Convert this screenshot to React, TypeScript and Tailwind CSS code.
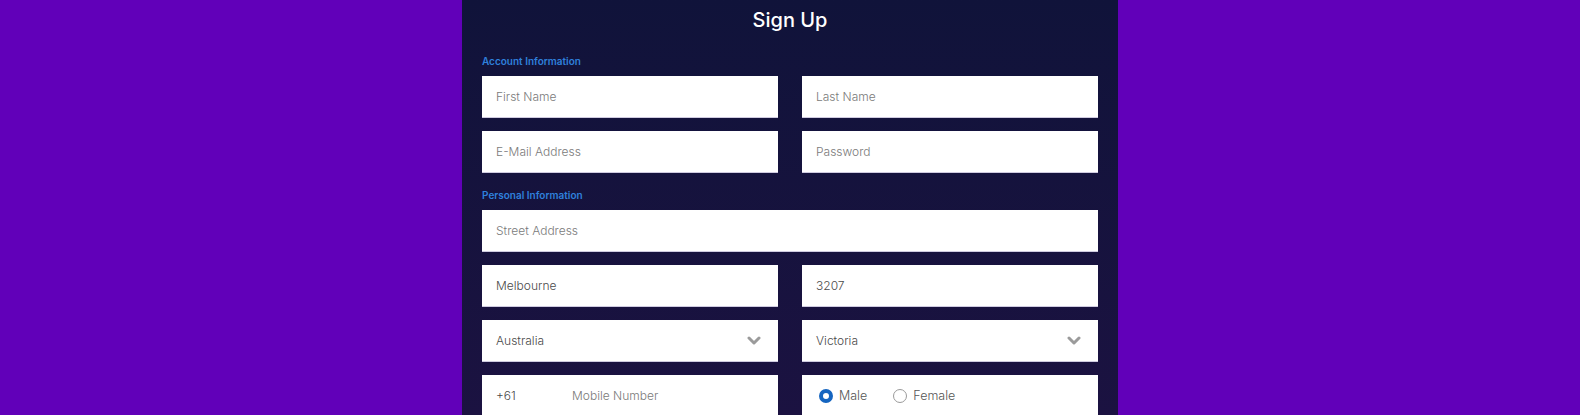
function Field({ placeholder, value, className = "" }: { placeholder?: string; value?: string; className?: string }) {
  return (
    <div className={`h-[42px] bg-white border-b border-[#cfcbe0] flex items-center px-[14px] ${className}`}>
      <span className={`text-[12px] font-light ${value ? "text-[#4a4a4a]" : "text-[#7a7a7a]"}`}>{value ?? placeholder}</span>
    </div>
  );
}

function SelectField({ value }: { value: string }) {
  return (
    <div className="h-[42px] bg-white border-b border-[#cfcbe0] flex items-center justify-between pl-[14px] pr-[17px]">
      <span className="text-[12px] font-light text-[#4a4a4a]">{value}</span>
      <svg width="14" height="9" viewBox="0 0 14 9" fill="none" stroke="#9b9b9b" strokeWidth="3" strokeLinecap="round" strokeLinejoin="round">
        <polyline points="2,2 7,7 12,2" />
      </svg>
    </div>
  );
}

function Radio({ label, checked }: { label: string; checked?: boolean }) {
  return (
    <label className="flex items-center gap-[6px]">
      {checked ? (
        <span className="w-[14px] h-[14px] rounded-full border-[4px] border-[#1565c0] bg-white" />
      ) : (
        <span className="w-[14px] h-[14px] rounded-full border border-[#9a9a9a] bg-white" />
      )}
      <span className="text-[12.5px] font-light text-[#555]">{label}</span>
    </label>
  );
}

export default function App() {
  return (
    <div
      className="w-[1580px] h-[415px] bg-[#6100b9] overflow-hidden flex justify-center"
      style={{ fontFamily: "Inter, 'Noto Sans', sans-serif" }}
    >
      <div className="w-[656px] h-full bg-gradient-to-b from-[#10133a] to-[#1b1241] px-[20px]">
        <h1 className="text-white text-[20px] font-medium text-center pt-[6px] leading-[28px]">Sign Up</h1>

        {/* Account */}
        <p className="text-[#2f80dc] text-[10px] font-semibold mt-[21px] leading-[12px]">Account Information</p>
        <div className="grid grid-cols-2 gap-x-[24px] gap-y-[13px] mt-[9px]">
          <Field placeholder="First Name" />
          <Field placeholder="Last Name" />
          <Field placeholder="E-Mail Address" />
          <Field placeholder="Password" />
        </div>

        {/* Personal */}
        <p className="text-[#2f80dc] text-[10px] font-semibold mt-[16px] leading-[12px]">Personal Information</p>
        <div className="grid grid-cols-2 gap-x-[24px] gap-y-[13px] mt-[9px]">
          <Field placeholder="Street Address" className="col-span-2" />
          <Field value="Melbourne" />
          <Field value="3207" />
          <SelectField value="Australia" />
          <SelectField value="Victoria" />
          <div className="h-[42px] bg-white flex items-center px-[14px]">
            <span className="text-[12px] font-light text-[#4a4a4a] w-[76px]">+61</span>
            <span className="text-[12px] font-light text-[#7a7a7a]">Mobile Number</span>
          </div>
          <div className="h-[42px] bg-white flex items-center px-[17px] gap-[26px]">
            <Radio label="Male" checked />
            <Radio label="Female" />
          </div>
        </div>
      </div>
    </div>
  );
}
